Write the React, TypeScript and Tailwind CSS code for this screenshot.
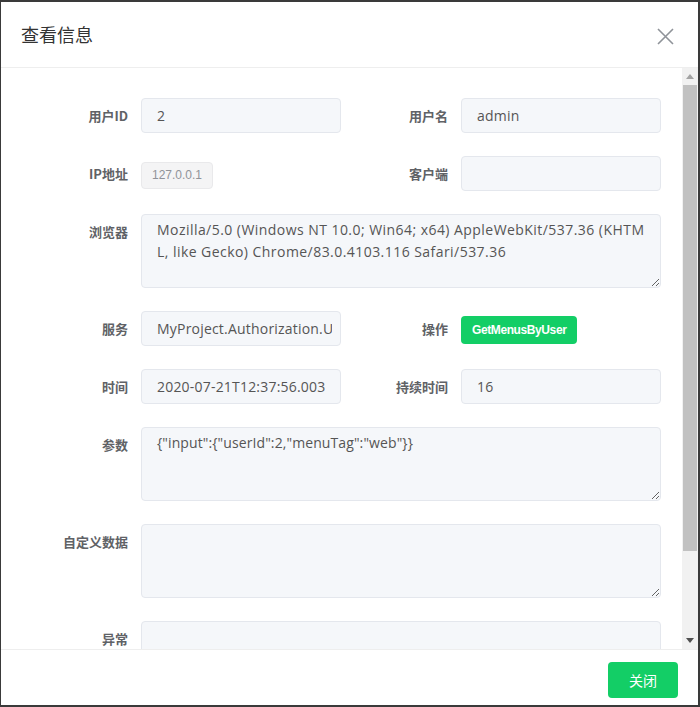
import React from "react";

const cjk = { fontFamily: '"Noto Sans CJK SC", "Liberation Sans", sans-serif' };
const latin = { fontFamily: '"Open Sans", "Noto Sans CJK SC", sans-serif' };
const tagFont = { fontFamily: '"Liberation Sans", "Noto Sans CJK SC", sans-serif' };

const inputCls =
  "h-[35px] w-[200px] rounded border border-[#e4e7ed] bg-[#f5f7fa] pl-[15px] pr-2 text-[14px] tracking-[0.2px] text-[#555] outline-none";

function Label({ text, width }: { text: string; width: string }) {
  return (
    <div
      className={`${width} shrink-0 pr-[13px] text-right text-[13px] font-bold leading-[35px] text-[#606266]`}
      style={cjk}
    >
      {text}
    </div>
  );
}

function Field({ value }: { value?: string }) {
  return <input readOnly className={inputCls} style={latin} value={value ?? ""} />;
}

function Area({ value, wide }: { value?: string; wide?: boolean }) {
  return (
    <textarea
      readOnly
      className={`block h-[74px] w-[520px] break-all rounded border border-[#e4e7ed] bg-[#f5f7fa] px-[15px] pt-[4px] text-[14px] leading-[22px] text-[#555] outline-none ${
        wide ? "tracking-[0.45px]" : "tracking-[0.1px]"
      }`}
      style={latin}
      value={value ?? ""}
    />
  );
}

export default function App() {
  return (
    <div className="flex h-[707px] w-[700px] flex-col border-b-2 border-l border-r-2 border-t-2 border-[#3a3a3a] bg-white">
      <div className="flex h-[66px] shrink-0 items-center justify-between border-b border-[#eeeeee] pl-[20px] pr-[24px]">
        <div className="text-[18px] text-[#333]" style={cjk}>
          查看信息
        </div>
        <svg width="17" height="17" viewBox="0 0 17 17" className="mt-[3px]">
          <path d="M1 1 L16 16 M16 1 L1 16" stroke="#8f9399" strokeWidth="1.6" />
        </svg>
      </div>

      <div className="flex min-h-0 flex-1">
        <div className="min-w-0 flex-1 overflow-hidden pt-[30px]">
          <div className="flex flex-col gap-[23px]">
            <div className="flex">
              <Label text="用户ID" width="w-[140px]" />
              <Field value="2" />
              <Label text="用户名" width="w-[120px]" />
              <Field value="admin" />
            </div>
            <div className="flex">
              <Label text="IP地址" width="w-[140px]" />
              <div className="w-[200px] pt-[5px]">
                <span
                  className="inline-block h-[27px] rounded border border-[#e9e9eb] bg-[#f4f4f5] px-[10px] text-[12px] leading-[25px] text-[#909399]"
                  style={tagFont}
                >
                  127.0.0.1
                </span>
              </div>
              <Label text="客户端" width="w-[120px]" />
              <Field />
            </div>
            <div className="flex">
              <Label text="浏览器" width="w-[140px]" />
              <Area
                wide
                value="Mozilla/5.0 (Windows NT 10.0; Win64; x64) AppleWebKit/537.36 (KHTML, like Gecko) Chrome/83.0.4103.116 Safari/537.36"
              />
            </div>
            <div className="flex">
              <Label text="服务" width="w-[140px]" />
              <Field value="MyProject.Authorization.Users.UserAppService" />
              <Label text="操作" width="w-[120px]" />
              <div className="pt-[5px]">
                <span
                  className="inline-block h-[28px] rounded bg-[#13ce66] px-[11px] text-[12px] font-bold leading-[28px] tracking-[-0.4px] text-white"
                  style={tagFont}
                >
                  GetMenusByUser
                </span>
              </div>
            </div>
            <div className="flex">
              <Label text="时间" width="w-[140px]" />
              <Field value="2020-07-21T12:37:56.003" />
              <Label text="持续时间" width="w-[120px]" />
              <Field value="16" />
            </div>
            <div className="flex">
              <Label text="参数" width="w-[140px]" />
              <Area value={'{"input":{"userId":2,"menuTag":"web"}}'} />
            </div>
            <div className="flex">
              <Label text="自定义数据" width="w-[140px]" />
              <Area />
            </div>
            <div className="flex">
              <Label text="异常" width="w-[140px]" />
              <Area />
            </div>
          </div>
        </div>

        <div className="flex w-[16px] shrink-0 flex-col bg-[#f1f1f1]">
          <div className="flex h-[17px] items-center justify-center">
            <svg width="8" height="5" viewBox="0 0 8 5">
              <path d="M0 5 L4 0 L8 5 Z" fill="#a3a3a3" />
            </svg>
          </div>
          <div className="mx-[1px] h-[466px] bg-[#c1c1c1]" />
          <div className="flex-1" />
          <div className="flex h-[17px] items-center justify-center">
            <svg width="8" height="5" viewBox="0 0 8 5">
              <path d="M0 0 L8 0 L4 5 Z" fill="#505050" />
            </svg>
          </div>
        </div>
      </div>

      <div className="flex h-[56px] shrink-0 items-start justify-end border-t border-[#eeeeee] pr-[20px] pt-[12px]">
        <button
          className="h-[36px] w-[70px] rounded bg-[#13ce66] text-[14px] text-white"
          style={cjk}
        >
          关闭
        </button>
      </div>
    </div>
  );
}
